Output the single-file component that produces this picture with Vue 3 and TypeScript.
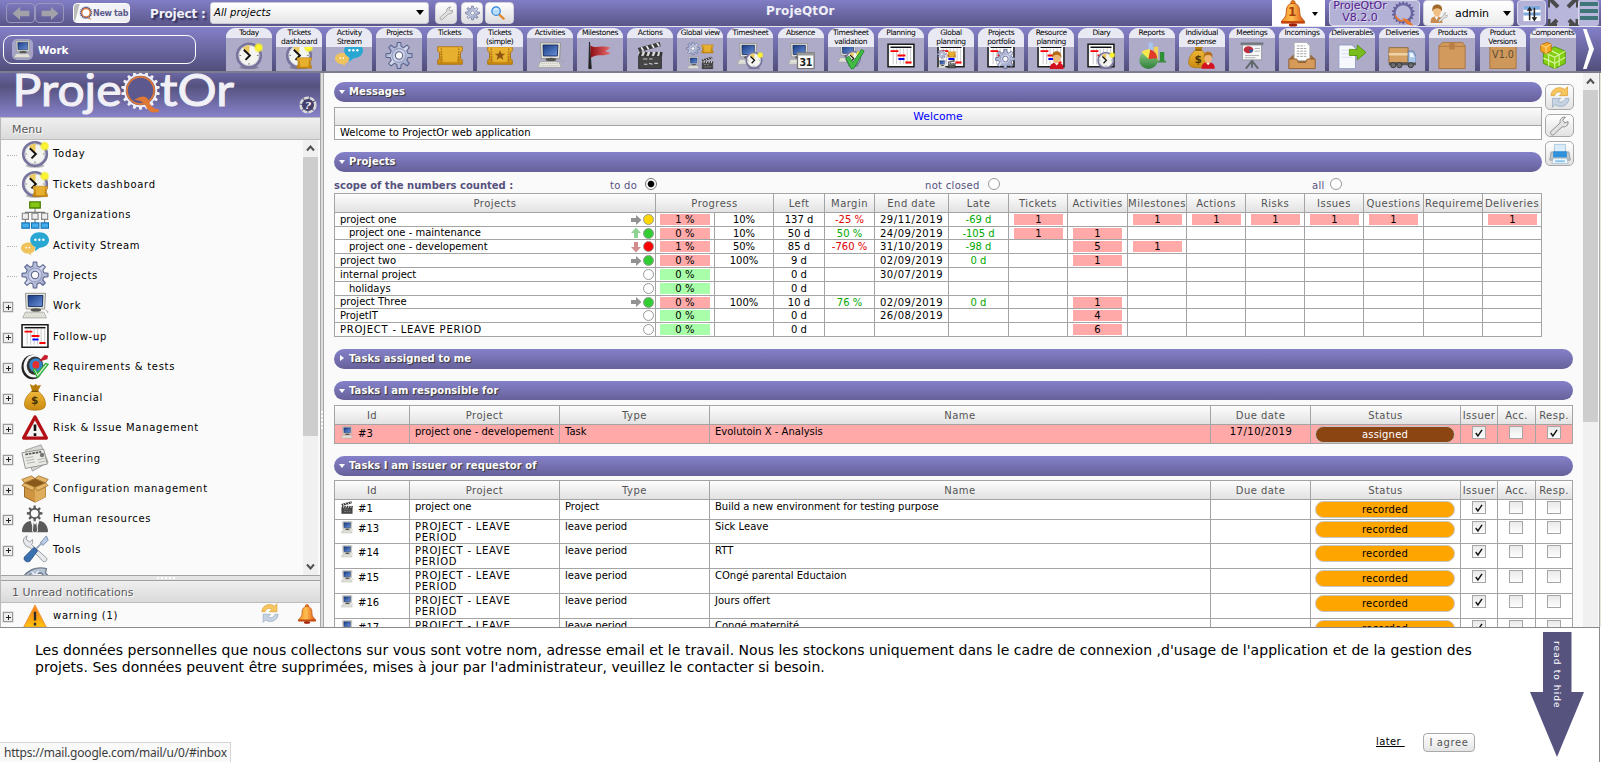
<script setup lang="ts">
interface Tool { label: string[]; icon: string }
interface Entry { label: string; icon: string; branch: boolean }
interface ProjectRow {
  name: string; indent?: boolean; trend?: 'right' | 'up' | 'down'; health?: string
  progress: string; late?: boolean; expected?: string; left: string
  margin?: string; end?: string; delay?: string; counts: (string | null)[]
}
interface TaskRow {
  id: string; icon: string; project: string; type: string; name: string
  due: string; status: string; checks: boolean[]; height: number; alert?: boolean
}
interface Mark { text: string; x: number; y: number; cls: string }

const tools: Tool[] = [
  { label: ['Today'], icon: 'clock' },
  { label: ['Tickets', 'dashboard'], icon: 'clockticket' },
  { label: ['Activity', 'Stream'], icon: 'stream' },
  { label: ['Projects'], icon: 'gear' },
  { label: ['Tickets'], icon: 'ticket' },
  { label: ['Tickets', '(simple)'], icon: 'ticketstar' },
  { label: ['Activities'], icon: 'computer' },
  { label: ['Milestones'], icon: 'flag' },
  { label: ['Actions'], icon: 'clapper' },
  { label: ['Global view'], icon: 'global' },
  { label: ['Timesheet'], icon: 'timesheet' },
  { label: ['Absence'], icon: 'absence' },
  { label: ['Timesheet', 'validation'], icon: 'validation' },
  { label: ['Planning'], icon: 'planning' },
  { label: ['Global', 'planning'], icon: 'globalplanning' },
  { label: ['Projects', 'portfolio'], icon: 'portfolio' },
  { label: ['Resource', 'planning'], icon: 'resource' },
  { label: ['Diary'], icon: 'diary' },
  { label: ['Reports'], icon: 'report' },
  { label: ['Individual', 'expense'], icon: 'expense' },
  { label: ['Meetings'], icon: 'meeting' },
  { label: ['Incomings'], icon: 'incoming' },
  { label: ['Deliverables'], icon: 'deliverable' },
  { label: ['Deliveries'], icon: 'truck' },
  { label: ['Products'], icon: 'box' },
  { label: ['Product', 'Versions'], icon: 'version' },
  { label: ['Components'], icon: 'component' },
]

// lettering that sits on top of an icon
const marks: Record<string, Mark> = {
  absence: { text: '31', x: 21.5, y: 27.5, cls: 'm-day' },
  money: { text: '$', x: 16, y: 24.5, cls: 'm-dollar' },
  expense: { text: '$', x: 11.5, y: 24, cls: 'm-dollar' },
  version: { text: 'V1.0', x: 16, y: 18.5, cls: 'm-version' },
}

const entries: Entry[] = [
  { label: 'Today', icon: 'clock', branch: false },
  { label: 'Tickets dashboard', icon: 'clockticket', branch: false },
  { label: 'Organizations', icon: 'org', branch: false },
  { label: 'Activity Stream', icon: 'stream', branch: false },
  { label: 'Projects', icon: 'gear', branch: false },
  { label: 'Work', icon: 'computer', branch: true },
  { label: 'Follow-up', icon: 'planning', branch: true },
  { label: 'Requirements & tests', icon: 'target', branch: true },
  { label: 'Financial', icon: 'money', branch: true },
  { label: 'Risk & Issue Management', icon: 'risk', branch: true },
  { label: 'Steering', icon: 'news', branch: true },
  { label: 'Configuration management', icon: 'openbox', branch: true },
  { label: 'Human resources', icon: 'hr', branch: true },
  { label: 'Tools', icon: 'tools', branch: true },
]

const none = (n: number): null[] => Array(n).fill(null)
const heads = ['Left', 'Margin', 'End date', 'Late', 'Tickets', 'Activities', 'Milestones', 'Actions', 'Risks', 'Issues', 'Questions', 'Requireme', 'Deliveries']
const rowHeights = [14, 13, 14, 14, 14, 14, 13, 14, 14]
const projects: ProjectRow[] = [
  { name: 'project one', trend: 'right', health: '#ffd700', progress: '1 %', late: true, expected: '10%', left: '137 d', margin: '-25 %', end: '29/11/2019', delay: '-69 d', counts: ['1', null, '1', '1', '1', '1', '1', null, '1'] },
  { name: 'project one - maintenance', indent: true, trend: 'up', health: '#32cd32', progress: '0 %', late: true, expected: '10%', left: '50 d', margin: '50 %', end: '24/09/2019', delay: '-105 d', counts: ['1', '1', ...none(7)] },
  { name: 'project one - developement', indent: true, trend: 'down', health: '#ff0000', progress: '1 %', late: true, expected: '50%', left: '85 d', margin: '-760 %', end: '31/10/2019', delay: '-98 d', counts: [null, '5', '1', ...none(6)] },
  { name: 'project two', trend: 'right', health: '#32cd32', progress: '0 %', late: true, expected: '100%', left: '9 d', end: '02/09/2019', delay: '0 d', counts: [null, '1', ...none(7)] },
  { name: 'internal project', progress: '0 %', left: '0 d', end: '30/07/2019', counts: none(9) },
  { name: 'holidays', indent: true, progress: '0 %', left: '0 d', counts: none(9) },
  { name: 'project Three', trend: 'right', health: '#32cd32', progress: '0 %', late: true, expected: '100%', left: '10 d', margin: '76 %', end: '02/09/2019', delay: '0 d', counts: [null, '1', ...none(7)] },
  { name: 'ProjetIT', progress: '0 %', left: '0 d', end: '26/08/2019', counts: [null, '4', ...none(7)] },
  { name: 'PROJECT - LEAVE PERIOD', progress: '0 %', left: '0 d', counts: [null, '6', ...none(7)] },
]

const taskHeads = ['Id', 'Project', 'Type', 'Name', 'Due date', 'Status', 'Issuer', 'Acc.', 'Resp.']
const leave = (id: string, name: string, height: number): TaskRow => ({
  id, icon: 'computer', project: 'PROJECT - LEAVE PERIOD', type: 'leave period', name, due: '', status: 'recorded', checks: [true, false, false], height,
})
const responsible: TaskRow[] = [
  { id: '#3', icon: 'computer', project: 'project one - developement', type: 'Task', name: 'Evolutoin X - Analysis', due: '17/10/2019', status: 'assigned', checks: [true, false, true], height: 19, alert: true },
]
const issued: TaskRow[] = [
  { id: '#1', icon: 'clapper', project: 'project one', type: 'Project', name: 'Build a new environment for testing purpose', due: '', status: 'recorded', checks: [true, false, false], height: 20 },
  leave('#13', 'Sick Leave', 24),
  leave('#14', 'RTT', 25),
  leave('#15', 'COngé parental Eductaion', 25),
  leave('#16', 'Jours offert', 25),
  leave('#17', 'Congé maternité', 25),
]
const groups = [
  { title: 'Tasks I am responsible for', rows: responsible, cls: 'resp' },
  { title: 'Tasks I am issuer or requestor of', rows: issued, cls: 'iss' },
]
const isCaps = (s: string): boolean => s === s.toUpperCase()

function gear(cx: number, cy: number, teeth: number, outer: number, inner: number): string {
  const step = (Math.PI * 2) / teeth
  const parts: string[] = []
  for (let i = 0; i < teeth; i++) {
    const a = i * step - Math.PI / 2
    const spots: [number, number][] = [[-0.3, inner], [-0.17, outer], [0.17, outer], [0.3, inner]]
    for (const [off, r] of spots) {
      const t = a + off * step
      parts.push(`${(cx + r * Math.cos(t)).toFixed(2)} ${(cy + r * Math.sin(t)).toFixed(2)}`)
    }
  }
  return 'M' + parts.join('L') + 'Z'
}
const cog = gear(16, 16, 8, 15, 10.5)
const ring = gear(0, 0, 18, 20, 17.2)
</script>

<template>
  <svg class="sprite" aria-hidden="true">
    <defs>
      <linearGradient id="gMetal" x1="0" y1="0" x2="1" y2="1"><stop offset="0" stop-color="#8e97bd" /><stop offset=".5" stop-color="#d5daec" /><stop offset="1" stop-color="#7f89b3" /></linearGradient>
      <linearGradient id="gScreen" x1="0" y1="0" x2="1" y2="1"><stop offset="0" stop-color="#173a83" /><stop offset="1" stop-color="#6b93d8" /></linearGradient>
      <linearGradient id="gGold" x1="0" y1="0" x2="0" y2="1"><stop offset="0" stop-color="#f0b73a" /><stop offset="1" stop-color="#c98a10" /></linearGradient>
      <linearGradient id="gRed" x1="0" y1="0" x2="1" y2="0"><stop offset="0" stop-color="#8f0d14" /><stop offset="1" stop-color="#ec6d70" /></linearGradient>
      <linearGradient id="gBell" x1="0" y1="0" x2="1" y2="0"><stop offset="0" stop-color="#f08a1d" /><stop offset=".45" stop-color="#ffbf52" /><stop offset="1" stop-color="#d9500c" /></linearGradient>
      <linearGradient id="gWarn" x1="0" y1="0" x2="0" y2="1"><stop offset="0" stop-color="#f5761a" /><stop offset="1" stop-color="#ffc50f" /></linearGradient>
      <linearGradient id="gGreen" x1="0" y1="0" x2="0" y2="1"><stop offset="0" stop-color="#8fd08b" /><stop offset="1" stop-color="#2f7d38" /></linearGradient>
      <radialGradient id="gSun"><stop offset="0" stop-color="#fffb2e" /><stop offset=".55" stop-color="#f7ee2d" /><stop offset="1" stop-color="#f7ee2d" stop-opacity="0" /></radialGradient>
    </defs>
    <symbol id="i-clock" viewBox="0 0 32 32">
      <ellipse cx="16" cy="29.5" rx="11" ry="2.3" fill="#000" opacity=".25" />
      <circle cx="16" cy="16" r="13.4" fill="#f4f4f1" stroke="#77759d" stroke-width="3.2" /><circle cx="16" cy="16" r="11.6" fill="none" stroke="#c9c9d6" />
      <path d="M16 16 9 7a12 12 0 0 1 8-3Z" fill="#eccb62" />
      <path d="M10 9.5 17 16l-5 5" fill="none" stroke="#111" stroke-width="2.2" /><path d="M16 24.500v2M25 16h2M5 16h2" stroke="#888" stroke-width="1.300" />
      <circle cx="27" cy="7" r="6" fill="url(#gSun)" />
    </symbol>
    <symbol id="i-ticket" viewBox="0 0 32 32">
      <path d="M2 6h28v5l-2 1.500v7l2 1.500v5H2v-5l2-1.500v-7L2 11Z" fill="url(#gGold)" stroke="#a9700b" stroke-width="1" />
      <path d="M6 8v16M26 8v16" stroke="#8f5f08" stroke-width="1.300" stroke-dasharray="1.500 1.500" />
      <path d="M8 9h16v14H8Z" fill="#e7b02f" />
    </symbol>
    <symbol id="i-ticketstar" viewBox="0 0 32 32"><use href="#i-ticket" /><path d="m16 10 1.700 4h4.300l-3.400 2.700 1.300 4.300-3.900-2.600-3.900 2.600 1.300-4.300L10 14h4.300Z" fill="#8a5410" /></symbol>
    <symbol id="i-clockticket" viewBox="0 0 32 32"><use href="#i-clock" /><use href="#i-ticket" x="12" y="15" width="20" height="19" /></symbol>
    <symbol id="i-stream" viewBox="0 0 32 32">
      <path d="M8 13c5 0 8 3 8 6.300s-2.500 5.700-5 6l1 2.700-4-2.300c-4 0-8-2.700-8-6.400S4 13 8 13Z" fill="#efc35e" />
      <path d="M21 1.500c6.500 0 11 4 11 8.800s-4.500 8.700-10.500 8.700L16 23l.5-4.800C12.500 17 10.500 13.500 10.500 10.300 10.500 5.500 15 1.500 21 1.500Z" fill="#27a7d2" />
      <g fill="#fff"><circle cx="16.500" cy="10" r="1.400" /><circle cx="21" cy="10" r="1.400" /><circle cx="25.500" cy="10" r="1.400" /><circle cx="6" cy="19" r=".9" /><circle cx="9.500" cy="19" r=".9" /></g>
    </symbol>
    <symbol id="i-gear" viewBox="0 0 32 32"><path :d="cog" fill="url(#gMetal)" stroke="#59638d" stroke-width="1.200" stroke-linejoin="round" /><circle cx="16" cy="16" r="8" fill="none" stroke="#9aa3c6" stroke-width="1.500" /><circle cx="16" cy="16" r="4.200" fill="#fbfbfb" stroke="#59638d" stroke-width="1.200" /></symbol>
    <symbol id="i-computer" viewBox="0 0 32 32">
      <path d="M5 1.500h23l-1 18H6Z" fill="#e2e2da" stroke="#8e8e88" /><path d="M8 4h17l-.6 12.500H8.500Z" fill="url(#gScreen)" stroke="#12265c" />
      <ellipse cx="17" cy="20.500" rx="6" ry="2" fill="#55554f" />
      <path d="M5 23h21l3 6.500H2Z" fill="#ecece6" stroke="#a2a29c" /><path d="M6 25h19M5 27.300h21" stroke="#bcbcb5" stroke-dasharray="1.500 1" /><path d="M28 21q4 .5 2.500 3" fill="none" stroke="#a2a29c" />
    </symbol>
    <symbol id="i-flag" viewBox="0 0 32 32"><path d="M4 .5 6 31H3.200Z" fill="#222" stroke="#222" /><path d="M5 4.500c7 4 12-1 23 2.500l-6 4 6.500 2C20 18 13 13 5.500 18.500Z" fill="url(#gRed)" /></symbol>
    <symbol id="i-clapper" viewBox="0 0 32 32">
      <path d="m2 7.500 25-7 1.300 5L4 12Z" fill="#3b3b3b" /><path d="m6 6.500 2.500 4M12 5l2.500 4M18 3.300l2.500 4M24 1.600l2.500 4" stroke="#eee" stroke-width="2" />
      <path d="M3 12h26v5H3Z" fill="#ddd" /><path d="m6 12-2 5M12 12l-2 5M18 12l-2 5M24 12l-2 5M29 12l-1 5" stroke="#333" stroke-width="3" />
      <path d="M3 17h26v14H3Z" fill="#454545" stroke="#2d2d2d" /><path d="M8 20h5M15 20h4M9 26h4m2-1 4 1m2-1h4" stroke="#ccc" stroke-width="1.200" />
    </symbol>
    <symbol id="i-global" viewBox="0 0 32 32"><use href="#i-gear" width="16" height="16" /><use href="#i-ticket" x="17" width="15" height="17" /><use href="#i-computer" x="1" y="17" width="15" height="15" /><use href="#i-clapper" x="17" y="17" width="15" height="15" /></symbol>
    <symbol id="i-timesheet" viewBox="0 0 32 32"><use href="#i-computer" width="27" height="29" /><use href="#i-clock" x="10" y="11" width="21" height="21" /></symbol>
    <symbol id="i-absence" viewBox="0 0 32 32"><use href="#i-computer" width="27" height="29" /><path d="M12 13h19v18H12Z" fill="#fafafa" stroke="#777" stroke-width="1.500" /><path d="M12 13h19v3H12Z" fill="#999" /></symbol>
    <symbol id="i-validation" viewBox="0 0 32 32"><use href="#i-timesheet" width="29" height="29" /><path d="m10 19 4-2 4 7L28 9l3 2-12 20h-3Z" fill="#43bb45" stroke="#21852c" /></symbol>
    <symbol id="i-planning" viewBox="0 0 32 32">
      <path d="M1.200 3.200h29.600v25.600H1.200Z" fill="#fff" stroke="#1d1d1d" stroke-width="1.800" /><path d="M4 6.500h24" stroke="#111" stroke-width="1.700" /><path d="M7 8v18M11 8v18M15 8v18M19 8v18M23 8v18M27 8v18" stroke="#bbb" stroke-width=".9" />
      <path d="M4 11h9M12 16h9M21 24h7" stroke="#f00" stroke-width="2.200" /><path d="M13 20h7" stroke="#00f" stroke-width="2.200" />
    </symbol>
    <symbol id="i-globalplanning" viewBox="0 0 32 32"><use href="#i-planning" /><use href="#i-global" x="0" y="9" width="22" height="22" /></symbol>
    <symbol id="i-portfolio" viewBox="0 0 32 32"><use href="#i-planning" /><use href="#i-gear" x="9" y="8" width="24" height="24" /></symbol>
    <symbol id="i-man" viewBox="0 0 32 32"><path d="M4 32c0-9 4-11 12-11s12 2 12 11Z" fill="#d4121f" /><path d="m12 21 4 5 4-5Z" fill="#fff" /><ellipse cx="16" cy="13" rx="6.500" ry="9" fill="#f0b878" /><path d="M8 13C7 3 12 1 16 1s9 2 8 12c-2-5-4-6-8-6s-6 1-8 6Z" fill="#b36e1c" /></symbol>
    <symbol id="i-resource" viewBox="0 0 32 32"><use href="#i-planning" /><use href="#i-man" x="12" y="10" width="21" height="22" /></symbol>
    <symbol id="i-diary" viewBox="0 0 32 32"><use href="#i-planning" /><use href="#i-clock" x="11" y="11" width="21" height="21" /></symbol>
    <symbol id="i-report" viewBox="0 0 32 32"><path d="M12 1h5v20h-5Z" fill="#a9c5f0" /><path d="M18 6h5v16h-5Z" fill="#f2d257" /><path d="M25 12h5v11h-5Z" fill="#2f8f36" /><path d="M22 22h10v2H22Z" fill="#3c8a3c" /><circle cx="12" cy="21" r="10.500" fill="url(#gGreen)" /><path d="M12 20 4 12q5-4 10-3Z" fill="#fbe84a" /><path d="m12 20 2-11q7 2 8 10Z" fill="#e23a26" /></symbol>
    <symbol id="i-money" viewBox="0 0 32 32"><path d="m10 1 4 2 3-2 2 2 4-1-4 8h-6Z" fill="#b97d0a" /><path d="M13 9h6c6 4 9 10 9 15 0 5-3 7-12 7S4 29 4 24c0-5 3-11 9-15Z" fill="url(#gGold)" stroke="#a8730c" stroke-width=".8" /><path d="M12 9.500h8" stroke="#7c5106" stroke-width="1.500" /></symbol>
    <symbol id="i-expense" viewBox="0 0 32 32"><use href="#i-money" x="-3" width="30" height="32" /><use href="#i-man" x="13" y="10" width="20" height="22" /></symbol>
    <symbol id="i-meeting" viewBox="0 0 32 32"><path d="M3 1h26v3H3Z" fill="#71777c" /><path d="M5 4h22v17H5Z" fill="#f6f7f8" stroke="#8d9397" /><ellipse cx="12" cy="9.500" rx="5.500" ry="4" fill="#c02e3c" /><path d="M12 9.500h5.500a5 4 0 0 1-3 3.600Z" fill="#2f5e9d" /><path d="M19 8h6M19 11h6M8 16h16M8 18.500h12" stroke="#aaa" /><path d="M16 21v9M16 22 9 31M16 22l7 9" stroke="#60666a" stroke-width="2.200" /></symbol>
    <symbol id="i-incoming" viewBox="0 0 32 32"><path d="M6 15h20l5 5v11H1V20Z" fill="#9b6a3a" /><path d="M7 1h14l4 4v17H7Z" fill="#fff" stroke="#aaa" /><path d="M10 5h9M10 8h12M10 11h12M10 14h12M10 17h12" stroke="#999" stroke-dasharray="3 1" /><path d="M1 20h9l2 4h8l2-4h9v11H1Z" fill="#d69a5b" stroke="#8d5c2c" /></symbol>
    <symbol id="i-deliverable" viewBox="0 0 32 32"><path d="M1 4h15l4 4v23H1Z" fill="#f6f8fd" stroke="#8e9ac0" /><path d="M4 10h12M4 14h12M4 18h12" stroke="#d5dbec" /><path d="M13 9h9V4l10 8.500L22 21v-5h-9Z" fill="#78bd1c" stroke="#55940c" /></symbol>
    <symbol id="i-truck" viewBox="0 0 32 32"><path d="M1 7h22v17H1Z" fill="#d5a263" stroke="#8d6738" /><path d="M1 13h22v3H1Z" fill="#eed1a4" /><path d="M23 11h6l3 6v8h-9Z" fill="#a9c6ec" stroke="#60789b" /><path d="M25 13h3l2 5h-5Z" fill="#edf5ff" /><path d="M1 24h31v3H1Z" fill="#555" /><g fill="#686d72" stroke="#333"><circle cx="6" cy="27" r="3" /><circle cx="13" cy="27" r="3" /><circle cx="26" cy="27" r="3" /></g></symbol>
    <symbol id="i-box" viewBox="0 0 32 32"><path d="M1 5 5 1h23l3 4v26H1Z" fill="#d39a5d" stroke="#a6713a" /><path d="M1 5.500h30" stroke="#ad763e" /><path d="M13 1h6v8h-6Z" fill="#b97f45" /></symbol>
    <symbol id="i-version" viewBox="0 0 32 32"><path d="M1 3h30v28H1Z" fill="#cf985b" stroke="#a6713a" /></symbol>
    <symbol id="i-component" viewBox="0 0 32 32"><path d="m5 12 13-6 12 5v14l-12 6L5 25Z" fill="#85cf12" stroke="#4d9308" /><path d="m5 12 13 6 12-7M18 18v13M11 9l12 6v13M11 15v13M5 19l13 6 12-7" fill="none" stroke="#d8f5a0" stroke-width="1.300" /><path d="m2 4 7-3 5 2v8l-6 3-6-3Z" fill="#f5a623" stroke="#b9700a" /><path d="m2 4 6 2.500L14 3M8 6.500V14" fill="none" stroke="#ffe1a5" /></symbol>
    <symbol id="i-org" viewBox="0 0 32 32"><path d="M16 8v5M5 17v-4h22v4M16 13v12M5 20v5M27 20v5" stroke="#777" fill="none" stroke-width="1.200" /><path d="M10 1h12v7H10Z" fill="#83c713" stroke="#4e8106" stroke-width="1.500" /><g fill="#eee" stroke="#888" stroke-width="1.300"><path d="M1.500 14h7v7h-7ZM12.500 14h7v7h-7ZM23.500 14h7v7h-7Z" /></g><g fill="#45aeea" stroke="#1474b8" stroke-width="1.300"><path d="M1 25h8.500v6H1ZM12 25h8.500v6H12ZM23 25h8.500v6H23Z" /></g></symbol>
    <symbol id="i-target" viewBox="0 0 32 32"><ellipse cx="13" cy="16" rx="12.500" ry="14" fill="#222" /><ellipse cx="15" cy="15" rx="12" ry="13" fill="#f4f4f4" /><ellipse cx="16" cy="14.500" rx="9.500" ry="10.500" fill="#333" /><ellipse cx="17" cy="14" rx="7.500" ry="8" fill="#3484cc" /><ellipse cx="17" cy="13.500" rx="4" ry="4.500" fill="#e32f2f" /><path d="m14 19 5 9L31 13l-3-1-9 11-3-5Z" fill="#d9f0d4" stroke="#2dae38" stroke-width="1.500" /><path d="m20 10 7-8 4 1-1 4Z" fill="#c61d2e" /></symbol>
    <symbol id="i-risk" viewBox="0 0 32 32"><path d="m16 3.500 13 24H3Z" fill="#f3f3f3" stroke="#b20f16" stroke-width="3.800" stroke-linejoin="round" /><path d="M16 12v7.500M16 22v3" stroke="#111" stroke-width="3" /></symbol>
    <symbol id="i-news" viewBox="0 0 32 32"><path d="m5 7 18-6 8 20-18 10Z" fill="#d8d8d3" stroke="#999" /><path d="m1 10 25-4 4 17-25 5Z" fill="#eaeae6" stroke="#8b8b87" /><path d="m5 12 18-3" stroke="#555" stroke-width="2" stroke-dasharray="3 1" /><path d="m5 16 9-1.500M6 19l9-1.500M7 22l9-1.500M19 18l8-1.500M20 21l8-1.500" stroke="#aaa" /><circle cx="24" cy="12.500" r="2.500" fill="#777" /></symbol>
    <symbol id="i-openbox" viewBox="0 0 32 32"><path d="m4 9 12 5 12-5v16l-12 6-12-6Z" fill="#cf9540" stroke="#8f5f1e" /><path d="M16 14v17l12-6V9Z" fill="#dfae5d" /><path d="m4 9 12-5 12 5-12 5Z" fill="#8a5a1c" /><path d="M4 9 1 5l11-4 4 3ZM28 9l3-4-11-4-4 3ZM4 9l12 5-3 4L1 12ZM28 9l-12 5 3 4 12-6Z" fill="#e5b766" stroke="#9b6b28" stroke-width=".9" /></symbol>
    <symbol id="i-hr" viewBox="0 0 32 32"><g fill="#5b5b5b"><path :d="cog" transform="translate(6 0) scale(.6)" /><path d="M1 30c1-8 5-11 10-12l4 13H2ZM31 30c-1-8-5-11-10-12l-4 13h13Z" /><path d="m14 19 2 3 2-3 1 11-3 2-3-2Z" stroke="#fbfbfb" /></g><circle cx="15.600" cy="9.600" r="4.300" fill="#fbfbfb" /></symbol>
    <symbol id="i-tools" viewBox="0 0 32 32"><path d="M3 8c-1-3 1-6 4-7l-1 4 4 3 3-3c1 3 0 5-1 6l17 15c2 2-1 6-4 4L10 14c-3 0-6-2-7-6Z" fill="#e7e9ec" stroke="#8b9096" /><path d="m29 1 2 5-6 6-3-3Z" fill="#b9cbe6" stroke="#7287a8" /><path d="m24 9-8 8" stroke="#9aa7b8" stroke-width="2" /><path d="m15 14 4 4-9 12c-3 2-8-1-6-5Z" fill="#3a6fb0" stroke="#234b7e" /></symbol>
    <symbol id="i-planet" viewBox="0 0 32 32"><path d="M3 12C10 2 22 1 29 3l-1 5 3 3-3 2-5-5-12 1-5 5Z" fill="#b5c2d2" stroke="#6d7c8d" stroke-width="1.500" /><path d="m12 7 4 3 4-4" fill="none" stroke="#eef" stroke-width="2" /></symbol>
    <symbol id="i-warning" viewBox="0 0 32 32"><path d="M16 1.500 30.500 30h-29Z" fill="url(#gWarn)" stroke="#f09a3a" stroke-width="1.500" stroke-linejoin="round" /><path d="M16 10v11M16 24v3.500" stroke="#2b2b2b" stroke-width="3" /></symbol>
    <symbol id="i-refresh" viewBox="0 0 32 32"><path d="M3 14C3 4 15-1 23 5l4-4v13H15l4-4c-5-3-9-1-11 4Z" fill="#f8c65e" stroke="#d79a2b" /><path d="M29 18c0 10-12 15-20 9l-4 4V18h12l-4 4c5 3 9 1 11-4Z" fill="#c5d3e4" stroke="#90a3bb" /></symbol>
    <symbol id="i-bell" viewBox="0 0 32 32"><circle cx="16" cy="3.200" r="2.500" fill="#ef8a1e" stroke="#b44608" /><path d="M16 4c7 0 8 6 8 11 0 6 4 7 6 11H2c2-4 6-5 6-11 0-5 1-11 8-11Z" fill="url(#gBell)" stroke="#b9470b" /><path d="M2 25h28v3H2Z" fill="#c5440d" /><ellipse cx="16" cy="29.500" rx="5" ry="2" fill="#9d1f08" /></symbol>
    <symbol id="i-wrench" viewBox="0 0 32 32"><path d="m3 25 14-13c-1-5 2-9 8-9l-4 5 3 4 5-2c1 6-4 9-9 8L7 30c-3 2-6-2-4-5Z" fill="#e2e2e2" stroke="#858585" stroke-width="1.400" /></symbol>
    <symbol id="i-print" viewBox="0 0 32 32"><path d="M8 2h16v12H8Z" fill="#d9ecfb" stroke="#9bb9cf" /><path d="M3 13h26l2 12H1Z" fill="#bcc3c9" stroke="#8b939a" /><path d="M6 12h20v9H6Z" fill="#2f91dc" /><path d="M6 22h20l2 8H4Z" fill="#eef6fc" stroke="#9eb5c6" /><path d="M9 25h14v3H9Z" fill="#8fc7ef" /></symbol>
    <symbol id="i-search" viewBox="0 0 32 32"><path d="m18 18 11 10" stroke="#e18b2c" stroke-width="5" stroke-linecap="round" /><circle cx="13" cy="12" r="9" fill="#b6dcfb" stroke="#2c82dc" stroke-width="2.600" /><path d="M8 10q4-5 8-2" fill="none" stroke="#fff" stroke-width="2" /></symbol>
    <symbol id="i-arrow" viewBox="0 0 18 14"><path d="M0 7 8 0v4h10v6H8v4Z" /></symbol>
    <symbol id="i-user" viewBox="0 0 32 32"><path d="M1 32c0-9 3-11 10-11s10 2 10 11Z" fill="#c98a4e" /><path d="m8 21 3 6 3-6Z" fill="#fff" /><ellipse cx="12" cy="12" rx="6.500" ry="9" fill="#f1bf83" /><path d="M4 13C3 3 8 1 12 1s10 2 8 12c-2-5-4-6-8-6s-6 1-8 6Z" fill="#a0682a" /><use href="#i-wrench" x="13" y="13" width="18" height="18" /></symbol>
  </svg>

  <div class="app">
    <header class="topbar">
      <div class="history">
        <span><svg><use href="#i-arrow" /></svg></span><span class="fwd"><svg><use href="#i-arrow" /></svg></span>
      </div>
      <div class="newtab">
        <svg viewBox="-22 -22 44 46"><path :d="ring" fill="#555a86" /><circle r="14" fill="#fff" /><circle r="13" fill="none" stroke="#e07835" stroke-width="4" /><path d="M2 8q8 10 16 13-10 3-16-13Z" fill="#e07835" /></svg>
        <span>New tab</span>
      </div>
      <label class="project">Project :</label>
      <div class="select"><span>All projects</span><i class="caret"></i></div>
      <div class="tbtn b1"><svg><use href="#i-wrench" /></svg></div>
      <div class="tbtn b2"><svg><use href="#i-gear" /></svg></div>
      <div class="tbtn b3"><svg><use href="#i-search" /></svg></div>
      <h1>ProjeQtOr</h1>
      <div class="alerts"><svg><use href="#i-bell" /></svg><b>1</b><i class="caret"></i></div>
      <div class="about">
        <span>ProjeQtOr<br />V8.2.0</span>
        <svg viewBox="-21 -21 43 44"><path :d="ring" fill="#62609a" /><circle r="15" fill="#b9b7da" /><circle r="14.500" fill="none" stroke="#62609a" stroke-width="2" /><path d="M-14 4a14.500 14.500 0 0 0 14 10" fill="none" stroke="#e8792f" stroke-width="3" /><path d="M-2 9q10 0 20 13-12 1-20-13Z" fill="#e8792f" /></svg>
      </div>
      <div class="user"><svg><use href="#i-user" /></svg><span>admin</span><i class="caret"></i></div>
      <div class="sort"><svg viewBox="0 0 20 20"><path d="M1 2h18v16H1Z" fill="#fff" /><path d="M1 2h18v4H1ZM1 9h18v3H1Z" fill="#7fa8dc" /><path d="M7.500 17V6M12.500 4v11" stroke="#222" stroke-width="1.600" /><path d="m4.500 7 3-4.500 3 4.500ZM9.500 14l3 4.500 3-4.500Z" fill="#222" /></svg></div>
      <div class="full"><svg viewBox="0 0 30 26"><g fill="none" stroke="#4a4a4a"><path d="m1-2 9 9M29-2l-9 9M1 28l8-8M29 28l-8-8" stroke-width="4" /><path d="M.5 7.500v-8M29.500 7.500v-8M1 19v7.500M29 19v7.500M1 25h8M29 25h-8" stroke-width="3" /></g></svg></div>
      <div class="burger"><i></i><i></i><i></i></div>
    </header>

    <nav class="toolbar">
      <div class="current"><span class="chip"><svg><use href="#i-computer" /></svg></span><b>Work</b></div>
      <ul class="tools">
        <li v-for="t in tools" :key="t.label.join()">
          <span class="lab"><template v-for="(l, i) in t.label" :key="l"><br v-if="i" />{{ l }}</template></span>
          <svg viewBox="0 0 32 32"><use :href="'#i-' + t.icon" /><text v-if="marks[t.icon]" :x="marks[t.icon].x" :y="marks[t.icon].y" class="mark" :class="marks[t.icon].cls">{{ marks[t.icon].text }}</text></svg>
        </li>
      </ul>
      <svg class="next" viewBox="0 0 12 40"><path d="M1 0h3.500L12 20 4.500 40H1l6-20Z" fill="#fff" /></svg>
    </nav>

    <div class="body">
      <aside class="side">
        <div class="logo">
          <svg viewBox="0 0 319 44">
            <g class="brand">
              <text x="12.500" y="33" textLength="109" lengthAdjust="spacingAndGlyphs">Proje</text>
              <text x="160" y="33" textLength="74" lengthAdjust="spacingAndGlyphs">tOr</text>
            </g>
            <g transform="translate(140.500 17.500) scale(.97)"><path :d="ring" fill="#f0f0f6" /><circle r="15.200" fill="#5d598f" /><circle r="14" fill="none" stroke="#e07835" stroke-width="1.800" /><path d="M-3 9q7 1 10 8t12 3.500q-9-1-11-8.500T-3 9Z" fill="#e07835" stroke="#e07835" stroke-width="2" /></g>
            <g transform="translate(308 32)"><circle r="7.300" fill="#44406e" stroke="#d9d9d9" stroke-width="2.600" stroke-dasharray="5 1" /><text y="3.600" class="help">?</text></g>
          </svg>
        </div>
        <h2 class="panel">Menu</h2>
        <div class="tree">
          <ul>
            <li v-for="e in entries" :key="e.label">
              <i :class="e.branch ? 'plus' : 'dots'"></i>
              <svg viewBox="0 0 32 32"><use :href="'#i-' + e.icon" /><text v-if="marks[e.icon]" :x="marks[e.icon].x" :y="marks[e.icon].y" class="mark" :class="marks[e.icon].cls">{{ marks[e.icon].text }}</text></svg>
              <span>{{ e.label }}</span>
            </li>
            <li class="cut"><i class="dots"></i><svg><use href="#i-planet" /></svg></li>
          </ul>
          <div class="bar"><svg viewBox="0 0 15 17"><path d="m4 10.500 3.500-4 3.500 4" /></svg><div class="thumb"></div><svg viewBox="0 0 15 17"><path d="m4 6.500 3.500 4 3.500-4" /></svg></div>
        </div>
        <div class="hsplit"><i></i></div>
        <h2 class="panel notif">1 Unread notifications</h2>
        <div class="warn">
          <i class="plus"></i><svg class="w"><use href="#i-warning" /></svg><span>warning (1)</span>
          <svg class="r"><use href="#i-refresh" /></svg><svg class="b"><use href="#i-bell" /></svg>
        </div>
      </aside>
      <div class="vsplit"><i></i></div>

      <main class="main">
        <div class="content">
          <div class="with-actions">
            <div class="narrow">
              <h3 class="sect"><i></i>Messages</h3>
              <div class="msg"><div class="mh">Welcome</div><div class="mb">Welcome to ProjectOr web application</div></div>
              <h3 class="sect"><i></i>Projects</h3>
              <div class="scope">
                <b>scope of the numbers counted :</b>
                <span class="s1">to do <i class="radio on"></i></span>
                <span class="s2">not closed <i class="radio"></i></span>
                <span class="s3">all <i class="radio"></i></span>
              </div>
              <div class="ptable">
                <div class="prow phead">
                  <div>Projects</div><div class="wide">Progress</div>
                  <div v-for="h in heads" :key="h">{{ h }}</div>
                </div>
                <div v-for="(p, i) in projects" :key="p.name" class="prow" :style="{ height: rowHeights[i] + 'px' }">
                  <div class="pname" :class="{ ind: p.indent }">
                    <span :class="{ caps: isCaps(p.name) }">{{ p.name }}</span>
                    <svg v-if="p.trend" class="trend" :class="p.trend" viewBox="0 0 12 12"><path d="M1 4h5V1l5.500 5L6 11V8H1Z" /></svg>
                    <i class="dot" :style="{ background: p.health || '#fff' }"></i>
                  </div>
                  <div><b class="pill first" :class="{ ok: !p.late }">{{ p.progress }}</b></div>
                  <div>{{ p.expected }}</div>
                  <div>{{ p.left }}</div>
                  <div :class="p.margin && p.margin[0] === '-' ? 'neg' : 'pos'">{{ p.margin }}</div>
                  <div class="date">{{ p.end }}</div>
                  <div class="pos">{{ p.delay }}</div>
                  <div v-for="(c, k) in p.counts" :key="k"><b v-if="c" class="pill">{{ c }}</b></div>
                </div>
              </div>
            </div>
            <div class="actions">
              <div class="act a1"><svg><use href="#i-refresh" /></svg></div>
              <div class="act a2"><svg><use href="#i-wrench" /></svg></div>
              <div class="act a3"><svg><use href="#i-print" /></svg></div>
            </div>
          </div>

          <h3 class="sect closed"><i></i>Tasks assigned to me</h3>
          <template v-for="g in groups" :key="g.title">
            <h3 class="sect" :class="g.cls"><i></i>{{ g.title }}</h3>
            <div class="ttable" :class="g.cls">
              <div class="trow thead"><div v-for="h in taskHeads" :key="h">{{ h }}</div></div>
              <div v-for="r in g.rows" :key="r.id" class="trow" :class="{ alert: r.alert }" :style="{ height: r.height + 'px' }">
                <div class="tid"><svg><use :href="'#i-' + r.icon" /></svg>{{ r.id }}</div>
                <div><span :class="{ caps: isCaps(r.project) }">{{ r.project }}</span></div><div>{{ r.type }}</div><div>{{ r.name }}</div>
                <div class="due">{{ r.due }}</div>
                <div class="st"><span :class="r.status">{{ r.status }}</span></div>
                <div v-for="(c, k) in r.checks" :key="k" class="ck"><i><svg v-if="c" viewBox="0 0 13 13"><path d="m3 6.500 2.300 3.200L9.800 3" /></svg></i></div>
              </div>
            </div>
          </template>
        </div>
        <div class="bar mainbar"><svg viewBox="0 0 15 17"><path d="m4 10.500 3.500-4 3.500 4" /></svg><div class="thumb"></div></div>
      </main>
    </div>

    <footer class="consent">
      <p>Les données personnelles que nous collectons sur vous sont votre nom, adresse email et le travail. Nous les stockons uniquement dans le cadre de connexion ,d'usage de l'application et de la gestion des<br />projets. Ses données peuvent être supprimées, mises à jour par l'administrateur, veuillez le contacter si besoin.</p>
      <div class="choices"><a>later&nbsp;</a><button>I agree</button></div>
      <svg class="hide" viewBox="0 0 54 125"><path d="M13 0h28.500v60H54L27 125 0 60h13Z" fill="#56537f" /><text transform="translate(24 9) rotate(90)">read to hide</text></svg>
    </footer>
    <div class="statusurl">https://mail.google.com/mail/u/0/#inbox</div>
  </div>
</template>

<style>
html, body { margin: 0; background: #fff; overflow: hidden; }
</style>

<style scoped>
* { box-sizing: border-box; }
.sprite { position: absolute; width: 0; height: 0; overflow: hidden; }
.app { position: relative; width: 1601px; height: 762px; overflow: hidden; display: flex; flex-direction: column; font: 10px "DejaVu Sans", Verdana, sans-serif; color: #000; background: #fff; }
ul { list-style: none; margin: 0; padding: 0; }
h1, h2, h3, p { margin: 0; font-size: inherit; }
svg { display: block; flex: none; }
i { display: block; flex: none; }
.caret { border: 4px solid transparent; border-top: 5px solid #000; border-bottom: 0; }
.mark { text-anchor: middle; }
.m-day { font: bold 11px "DejaVu Sans", sans-serif; fill: #222; letter-spacing: -.5px; }
.m-dollar { font: bold 12px "DejaVu Sans", sans-serif; fill: #4a3406; }
.m-version { font: 11px "DejaVu Sans", sans-serif; fill: #5b4a36; }

.topbar { flex: none; height: 27px; display: flex; align-items: flex-start; padding-left: 6px; position: relative; background: linear-gradient(#827ec6, #595588); border-bottom: 1px solid #e4e4f0; white-space: nowrap; }
.history { display: flex; margin-top: 3px; }
.history span { width: 29px; height: 20px; border: 1px solid #9a97bd; border-radius: 4px; padding: 3px 5px; }
.history svg { width: 18px; height: 13px; fill: #a3a2ab; }
.fwd svg { transform: scaleX(-1); }
.newtab { width: 57px; height: 20px; margin: 3px 0 0 9px; border: 1px solid #fff; border-radius: 4px; background: linear-gradient(105deg, #bbb 5px, #f8f8fb 6px, #ececf2); display: flex; align-items: center; padding-left: 5px; }
.newtab svg { width: 14px; height: 16px; }
.newtab span { font: bold 8px "DejaVu Sans", sans-serif; letter-spacing: -.3px; color: #5d5b8b; }
.project { margin: 7px 0 0 20px; width: 60px; font: bold 12px/14px "DejaVu Sans", sans-serif; letter-spacing: -.15px; color: #f1f1f8; text-shadow: 2px 2px 2px #2c2950; }
.select { width: 219px; height: 22px; margin-top: 2px; border: 1px solid #c9c9d2; border-radius: 3px; background: linear-gradient(#fff, #e6e6e6); display: flex; align-items: center; justify-content: space-between; padding: 0 4px 1px 3px; font: italic 10px "DejaVu Sans", sans-serif; letter-spacing: .1px; }
.tbtn { height: 22px; margin-top: 2px; border-radius: 4px; border: 1px solid #d2d2dc; background: linear-gradient(#fff, #dcdce0); display: flex; align-items: center; justify-content: center; }
.tbtn svg { width: 15px; height: 16px; }
.b1 { width: 22px; margin-left: 6px; } .b2 { width: 22px; margin-left: 4px; } .b3 { width: 29px; margin-left: 2px; padding-right: 4px; }
h1 { margin: 3px 0 0 252px; width: 200px; font: bold 12px/16px "DejaVu Sans", sans-serif; letter-spacing: .15px; color: #efeff7; }
.alerts { width: 53px; height: 26px; background: #fff; display: flex; align-items: center; padding-left: 7px; gap: 5px; position: relative; margin-left: auto; }
.alerts svg { width: 28px; height: 27px; }
.alerts b { position: absolute; left: 16px; top: 5px; font: bold 12px "DejaVu Sans", sans-serif; color: #a3400b; }
.alerts .caret { border-width: 4px 3px 0; margin-top: 1px; }
.about { width: 91px; height: 26px; margin-left: 4px; border: 1px solid #dad9ec; border-radius: 4px; background: #b3b1d6; display: flex; padding-left: 3px; gap: 4px; color: #551a8b; font: 11px/12px "DejaVu Sans", sans-serif; text-align: center; text-shadow: 1px 1px #dcdcf0; }
.about span { margin-top: -1px; width: 54px; }
.about svg { width: 25px; height: 25px; }
.user { width: 91px; height: 26px; margin-left: 3px; border: 1px solid #d0d0da; border-radius: 4px; background: linear-gradient(#fff, #ececec); display: flex; align-items: center; padding-left: 6px; font-size: 11px; letter-spacing: -.1px; }
.user svg { width: 19px; height: 21px; margin-right: 6px; }
.user .caret { margin-left: 14px; }
.sort { width: 29px; height: 26px; margin-left: 3px; border: 1px solid #dad9ec; border-radius: 4px; background: #b3b1d6; display: flex; align-items: center; justify-content: center; }
.sort svg { width: 20px; height: 19px; }
.full { width: 30px; height: 26px; margin-left: 2px; background: #b8b6da; }
.full svg { width: 30px; height: 26px; }
.burger { width: 21px; height: 26px; margin: 0 2px 0 0; padding-top: 2px; background: #b8b6da; border-radius: 3px; padding-left: 1px; border-left: 1px solid #dad9ec; }
.burger i { width: 18px; height: 4px; background: #3f7478; margin-bottom: 3px; }

.toolbar { flex: none; height: 46px; position: relative; display: flex; background: linear-gradient(#8480c8, #514e7c); border-bottom: 2px solid #7d7c8e; }
.current { width: 193px; height: 29px; margin: 8px 30px 0 3px; border: 1px solid #fff; border-radius: 9px; display: flex; align-items: center; padding-left: 8px; gap: 5px; color: #fff; font-size: 10.5px; }
.chip { width: 21px; height: 21px; border-radius: 5px; background: #a5a4c8; padding: 1px; }
.chip svg { width: 19px; height: 19px; }
.tools { display: flex; gap: 4.150px; margin-top: 1px; }
.tools li { position: relative; width: 46px; height: 43px; border-radius: 9px 9px 0 0; background: #adabc8; overflow: hidden; }
.lab { display: block; background: #e9e9f4; text-align: center; font: 7.500px/9px "DejaVu Sans", sans-serif; letter-spacing: -.4px; white-space: nowrap; padding-bottom: .5px; }
.tools svg { position: absolute; left: 9px; top: 13px; width: 28px; height: 29px; z-index: 0; }
.tools .lab { position: relative; z-index: 1; }
.next { width: 12px; height: 40px; margin: 2px 0 0 6px; }

.body { flex: none; height: 554px; display: flex; }
.side { width: 320px; height: 554px; display: flex; flex-direction: column; border-left: 1px solid #b8b8b8; background: #fafafa; }
.logo { flex: none; height: 44px; margin-left: -1px; background: linear-gradient(#6a66a4 0, #56527f 30%, #8782ca 100%); }
.logo svg { width: 319px; height: 44px; }
.brand text { font: 45px Lato, sans-serif; fill: #f0f0f6; stroke: #f0f0f6; stroke-width: 1; }
.help { font: italic bold 10px "DejaVu Serif", serif; fill: #fff; text-anchor: middle; }
.panel { flex: none; height: 23px; border: 1px solid #bdbdbd; border-width: 1px 0; background: linear-gradient(#efefef, #dadada); font: 11px/23px "DejaVu Sans", sans-serif; color: #5a5a5a; padding-left: 11px; text-shadow: 1px 1px #fff; }
.tree { flex: none; height: 435px; display: flex; overflow: hidden; }
.tree ul { width: 302px; margin-top: -1.500px; }
.tree li { display: flex; align-items: center; height: 30.450px; letter-spacing: .7px; }
.tree li svg { width: 28px; height: 28px; margin-right: 4px; }
.dots { width: 10px; margin: 3px 4px 0 6px; border-top: 1px dotted #b4b4b4; }
.plus { width: 10px; height: 10px; margin: 3px 8px 0 2px; border: 1px solid #9a9a9a; background: linear-gradient(#222, #222) center / 5px 1px no-repeat, linear-gradient(#222, #222) center / 1px 5px no-repeat, #eee; box-shadow: 0 0 0 .5px #ccc; }
.bar { width: 15px; height: 100%; background: #f0f0f0; display: flex; flex-direction: column; }
.bar svg { width: 15px; height: 17px; }
.bar path { fill: none; stroke: #505050; stroke-width: 2; }
.tree .thumb { height: 279px; background: #cdcdcd; margin-bottom: auto; }
.hsplit { flex: none; height: 6px; border: 1px solid #a2a2a2; border-width: 1px 0; background: #e4e4e4; display: flex; justify-content: center; }
.hsplit i { width: 18px; height: 2px; margin: 1px 0 0 10px; border-top: 2px dotted #fff; }
.notif { height: 22px; border-top: 0; line-height: 24px; }
.warn { flex: none; height: 24px; display: flex; overflow: hidden; letter-spacing: .7px; }
.warn .plus { margin-top: 9px; }
.warn .w { width: 28px; height: 25px; margin: 1px 4px 0 0; }
.warn span { width: 207px; line-height: 26px; }
.warn .r { width: 20px; height: 20px; margin: 0 17px 0 0; }
.warn .b { width: 20px; height: 20px; margin-top: 1px; }
.vsplit { width: 4px; border: 1px solid #a8a8a8; border-width: 0 1px; background: #ddd; display: flex; align-items: center; }
.vsplit i { height: 18px; width: 2px; margin-top: 140px; border-left: 2px dotted #fff; }

.main { width: 1276px; height: 554px; display: flex; background: #fafafa; border-right: 1px solid #aaa; box-shadow: 1px 0 #e9e4d8; overflow: hidden; }
.content { width: 1259px; padding: 9px 0 0 10px; }
.with-actions { display: flex; height: 267px; }
.narrow { width: 1208px; }
.sect { position: relative; height: 20px; width: 1239px; border-radius: 10px; background: linear-gradient(#8581c9, #66619a); color: #fff; font: bold 10px/20px "DejaVu Sans", sans-serif; text-shadow: 1px 1px 1px #333; padding-left: 15px; letter-spacing: .08px; }
.narrow .sect { width: 1208px; }
.sect i { position: absolute; left: 5px; top: 8px; border: 3px solid transparent; border-top: 4px solid #fff; border-bottom: 0; }
.closed i { left: 6px; top: 6px; border: 3px solid transparent; border-left: 4px solid #fff; border-right: 0; }
.msg { height: 33px; margin: 5px 0 12px; border: 1px solid #a4a4a4; background: #fff; }
.mh { height: 18px; border-bottom: 1px solid #a4a4a4; background: linear-gradient(#fbfbfb, #e4e4e4); text-align: center; color: #0000ff; font-size: 10.800px; line-height: 18px; }
.mb { padding-left: 5px; line-height: 13px; }
.scope { position: relative; height: 21px; color: #56527f; display: flex; letter-spacing: .3px; line-height: 27px; }
.scope b { width: 275px; letter-spacing: 0; }
.scope span { display: flex; gap: 8px; }
.s1 { width: 316px; padding-left: 1px; } .s2 { width: 387px; }
.scope .s3 { gap: 5px; }
.radio { width: 12px; height: 12px; margin-top: 6px; border-radius: 50%; border: 1.500px solid #999; background: #fff; }
.radio.on { background: radial-gradient(#000 0 2.800px, #fff 3.800px); border-color: #777; }
.ptable { border: 1px solid #a4a4a4; border-width: 1px 0 0 1px; background: #fff; }
.prow { display: grid; grid-template-columns: 321px 59px 59px 51px 50px 74px 60px 59px 60px 59px 59px 59px 59px 60px 59px 59px; }
.prow > div { border: 1px solid #a4a4a4; border-width: 0 1px 1px 0; text-align: center; overflow: hidden; white-space: nowrap; line-height: 14px; min-width: 0; }
.phead { height: 19px; }
.phead > div { background: linear-gradient(#fdfdfd, #e2e2e2); color: #545454; line-height: 20px; letter-spacing: .45px; display: flex; justify-content: center; }
.phead > div:nth-child(14) { justify-content: flex-start; padding-left: 1px; }
.wide { grid-column: span 2; }
.prow > .pname { display: flex; align-items: center; padding: 0 1px 0 5px; }
.prow > .ind { padding-left: 14px; }
.pname span { margin-right: auto; }
.caps { letter-spacing: .75px; }
.dot { width: 11px; height: 11px; border-radius: 50%; border: 1px solid #999; margin-left: 1px; }
.trend { width: 12px; height: 12px; fill: #929292; }
.up { transform: rotate(-90deg); fill: #8ed294; }
.down { transform: rotate(90deg); fill: #d28e8e; }
.pill { display: block; width: 49px; height: 11px; margin: 1px 0 0 5px; background: #ffa9a9; font-weight: 400; line-height: 12px; letter-spacing: .2px; }
.pill.first { width: 50px; margin-left: 4px; }
.pill.ok { background: #a9ffa9; }
.date { letter-spacing: .55px; }
.neg { color: #e00000; } .pos { color: #00a800; }
.actions { padding: 2px 0 0 3px; }
.act { width: 29px; border: 1px solid #a9a9a9; border-radius: 5px; background: linear-gradient(#fff, #e2e2e2); display: flex; align-items: center; justify-content: center; }
.act svg { width: 24px; height: 22px; }
.a1 { height: 26px; } .a2 { height: 23px; margin-top: 4px; } .a3 { height: 25px; margin-top: 4px; }
.a2 svg { width: 21px; height: 21px; }
.sect.resp { margin-top: 12px; height: 19px; line-height: 19px; }
.sect.iss { margin-top: 12px; }
.ttable { width: 1239px; border: 1px solid #a4a4a4; border-width: 1px 0 0 1px; background: #fff; margin-top: 5px; }
.ttable.iss { margin-top: 4px; }
.trow { display: grid; grid-template-columns: 75px 150px 150px 501px 100px 150px 37px 38px 37px; }
.trow > div { border: 1px solid #a4a4a4; border-width: 0 1px 1px 0; padding: 1px 4px 0 5px; line-height: 11px; overflow: hidden; }
.trow .caps { display: block; width: 110px; }
.thead { height: 19px; }
.trow.thead > div { background: linear-gradient(#fdfdfd, #e2e2e2); color: #545454; text-align: center; letter-spacing: .45px; line-height: 20px; padding: 0; white-space: nowrap; }
.alert { background: #ffa9a9; }
.trow > .tid { display: flex; padding-top: 1px; gap: 4px; line-height: 15px; }
.tid svg { width: 14px; height: 13px; }
.trow > .due { text-align: center; letter-spacing: .5px; }
.trow > .st { padding: 1px 0 0 4px; }
.st span { display: block; width: 140px; height: 17px; border: 1px solid #c6c6c6; border-radius: 9px; text-align: center; line-height: 16px; letter-spacing: .2px; }
.recorded { background: #ffa500; } .assigned { background: #8b4513; color: #fff; }
.trow > .ck { display: flex; justify-content: center; padding: 1px 1px 0 0; }
.ck i { width: 14px; height: 13px; border: 1px solid #a6a6a6; background: linear-gradient(#e9e9e9, #fdfdfd); }
.ck svg { width: 12px; height: 12px; }
.ck path { fill: none; stroke: #111; stroke-width: 1.500; }
.mainbar .thumb { height: 332px; background: #cdcdcd; }

.consent { flex: none; position: relative; height: 135px; width: 1600px; border: 1px solid #8a8a8a; border-width: 1px 1px 0 0; background: #fff; padding: 14px 0 0 35px; }
.consent p { font: 14px/17px "DejaVu Sans", sans-serif; white-space: nowrap; letter-spacing: .036px; }
.choices { position: absolute; left: 1376px; top: 105px; display: flex; align-items: flex-start; }
.choices a { width: 47px; text-decoration: underline; line-height: 18px; letter-spacing: .4px; }
.choices button { width: 52px; height: 19px; padding: 0; border: 1px solid #a9a9a9; border-radius: 4px; background: linear-gradient(#fff, #e4e4e4); font: 10px "DejaVu Sans", sans-serif; letter-spacing: .6px; color: #555; }
.hide { position: absolute; left: 1530px; top: 4px; width: 54px; height: 125px; }
.hide text { font: 9px "DejaVu Sans", sans-serif; fill: #fff; letter-spacing: 1.100px; }
.statusurl { position: absolute; left: 0; bottom: 0; width: 231px; height: 20px; background: #f9f9f9; border: 1px solid #d5d5d5; border-width: 1px 1px 0 0; font: 12px/20px "Noto Sans", "Open Sans", sans-serif; letter-spacing: -.2px; color: #3c3c3c; padding-left: 4px; white-space: nowrap; }
</style>
